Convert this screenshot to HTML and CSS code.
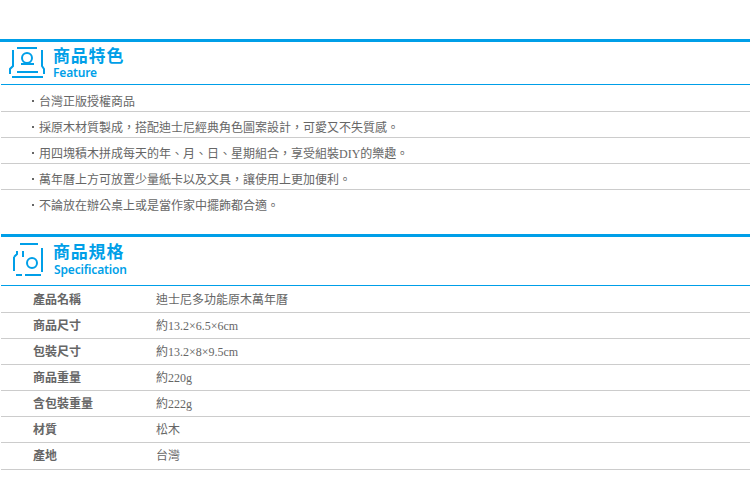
FILE: index.html
```html
<!DOCTYPE html>
<html lang="zh-Hant">
<head>
<meta charset="utf-8">
<title>商品特色</title>
<link rel="stylesheet" href="styles.css">
</head>
<body>
<section class="section feature">
  <header class="head">
    <svg class="icon" width="37" height="33" viewBox="9 46 37 33" fill="none" stroke="#009fe8" stroke-width="2">
      <path d="M17 48H37"/>
      <circle cx="27" cy="58" r="5"/>
      <path d="M13 50V66L10 69V74M42 50V66L44 69V74"/>
      <path d="M21 64H34M17 72H38"/>
      <path d="M12 77H43"/>
    </svg>
    <div class="titles">
      <h2 class="title">商品特色</h2>
      <p class="sub">Feature</p>
    </div>
  </header>
  <ul class="list">
    <li>台灣正版授權商品</li>
    <li>採原木材質製成，搭配迪士尼經典角色圖案設計，可愛又不失質感。</li>
    <li>用四塊積木拼成每天的年、月、日、星期組合，享受組裝DIY的樂趣。</li>
    <li>萬年曆上方可放置少量紙卡以及文具，讓使用上更加便利。</li>
    <li>不論放在辦公桌上或是當作家中擺飾都合適。</li>
  </ul>
</section>
<section class="section spec">
  <header class="head">
    <svg class="icon" width="32" height="36" viewBox="12 242 32 36" fill="none" stroke="#009fe8" stroke-width="2">
      <path d="M20 244H38M42 248V272M16 275H22M25 275H41"/>
      <path d="M14 257V271M14 257L17 254V251M23 251V257"/>
      <circle cx="32" cy="263" r="5"/>
    </svg>
    <div class="titles">
      <h2 class="title">商品規格</h2>
      <p class="sub">Specification</p>
    </div>
  </header>
  <dl class="table">
    <div class="row"><dt>產品名稱</dt><dd>迪士尼多功能原木萬年曆</dd></div>
    <div class="row"><dt>商品尺寸</dt><dd>約13.2×6.5×6cm</dd></div>
    <div class="row"><dt>包裝尺寸</dt><dd>約13.2×8×9.5cm</dd></div>
    <div class="row"><dt>商品重量</dt><dd>約220g</dd></div>
    <div class="row"><dt>含包裝重量</dt><dd>約222g</dd></div>
    <div class="row"><dt>材質</dt><dd>松木</dd></div>
    <div class="row last"><dt>產地</dt><dd>台灣</dd></div>
  </dl>
</section>
</body>
</html>
```
FILE: styles.css
```css
* { box-sizing: border-box; }
html, body { margin: 0; padding: 0; background: #fff; }
body {
  width: 750px;
  height: 495px;
  overflow: hidden;
  padding-top: 39px;
  font-family: "Liberation Serif", "Noto Sans CJK TC", serif;
  font-size: 12px;
  color: #666;
}
.section { border-top: 3px solid #009fe8; }
.spec { margin-top: 18px; margin-left: 1px; }
.head {
  height: 43px;
  border-bottom: 1px solid #009fe8;
  display: flex;
  align-items: flex-start;
  padding: 3px 0 0 8px;
  margin-left: 1px;
}
.spec .head { margin-left: 0; height: 49px; padding: 4px 0 0 11px; }
.icon { flex: none; margin: 1px 7px 0 0; }
.spec .icon { margin-right: 9px; }
.titles { display: flex; flex-direction: column; }
.title {
  margin: 0;
  font: 700 17px/20px "Noto Sans CJK TC", sans-serif;
  color: #009fe8;
  letter-spacing: 0.8px;
}
.sub {
  margin: 0;
  font: 600 12px/16px "Noto Sans", sans-serif;
  letter-spacing: -0.15px;
  color: #009fe8;
}
.spec .sub { margin-top: 1px; padding-left: 1px; }
.list { list-style: none; margin: 1px 0 0 1px; padding: 0; }
.list li {
  height: 26px;
  line-height: 17px;
  padding: 8px 0 0 38px;
  border-bottom: 1px solid #ccc;
  position: relative;
}
.list li::before {
  content: "";
  position: absolute;
  left: 31px;
  top: 14px;
  width: 2px;
  height: 2px;
  background: #666;
}
.list li:last-child { border-bottom: 0; }
.table { margin: 1px 0 0; }
.row {
  display: flex;
  height: 26px;
  line-height: 25px;
  padding-top: 1px;
  border-bottom: 1px solid #ccc;
}
.row.last { height: 27px; }
.row dt { width: 155px; padding-left: 32px; font-weight: 700; line-height: 21px; font-family: "Noto Sans CJK TC", sans-serif; }
.row dd { margin: 0; }
```
